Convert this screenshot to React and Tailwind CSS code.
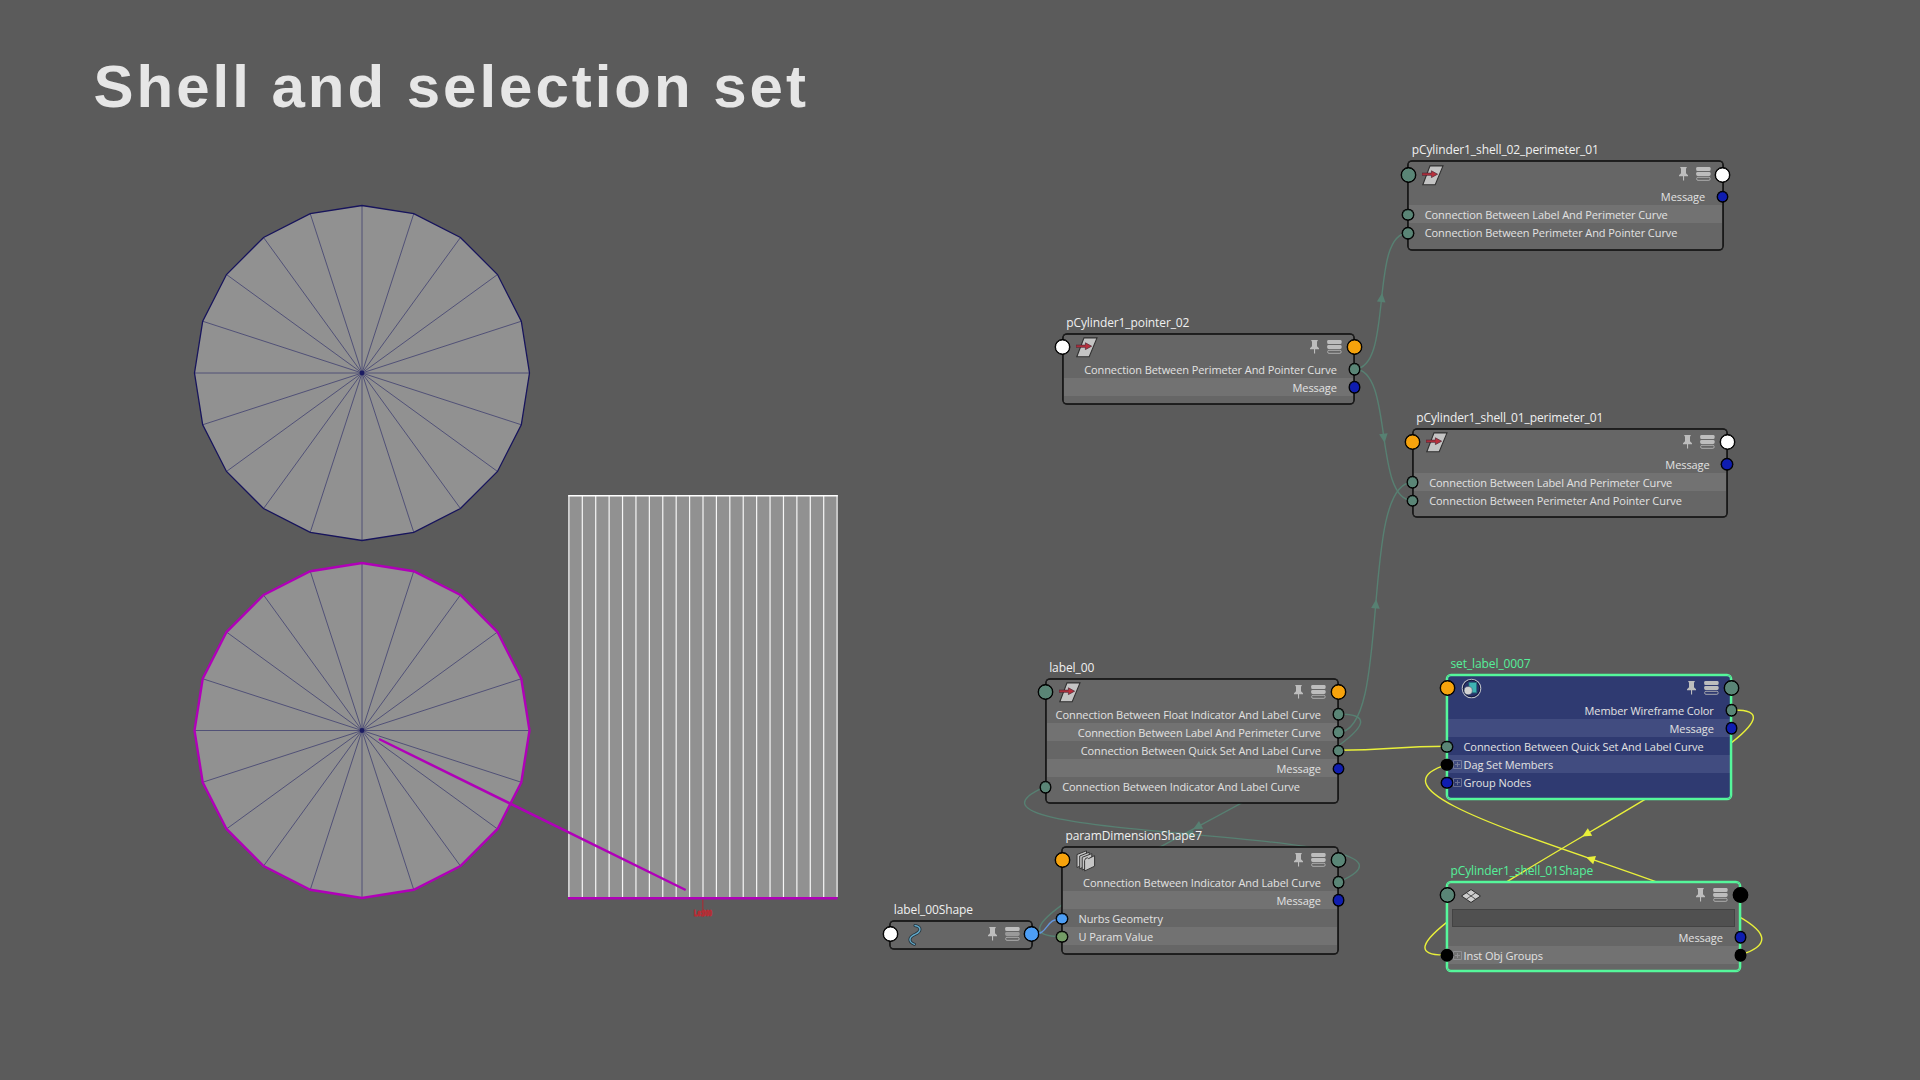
import React from 'react';

const PORT_COLORS = {
  teal: 'bg-[#5a8576]',
  white: 'bg-white',
  orange: 'bg-[#f7a30c]',
  navy: 'bg-[#0f1db0]',
  black: 'bg-black',
  sky: 'bg-[#4d9ef5]',
  green: 'bg-[#749c66]',
};

function Port({ side, color, big }) {
  const size = big ? 'size-[15px]' : 'size-[11.5px]';
  let edge;
  if (side === 'left') edge = big ? '-left-[7.5px]' : '-left-[5.75px]';
  else edge = big ? '-right-[7.5px]' : '-right-[5.75px]';
  return (
    <span
      className={`absolute top-[calc(50%+0.6px)] z-10 -translate-y-1/2 rounded-full border border-black shadow-[0_0_0_0.4px_#000] ${size} ${edge} ${PORT_COLORS[color]}`}
    />
  );
}

function CurveSetIcon() {
  return (
    <svg width="22" height="21" viewBox="0 0 22 21">
      <path d="M8 .9H21L13.2 19.8H.8Z" fill="#c4c4c4" stroke="#303030" strokeWidth="1.1" />
      <path d="M0 8.1H9.4V5.8L15.6 9.2L9.4 12.6V10.3H0Z" fill="#b92f3c" stroke="#4c2733" strokeWidth=".7" />
    </svg>
  );
}

function SetIcon() {
  return (
    <svg width="21" height="21" viewBox="0 0 21 21">
      <circle cx="10.5" cy="10.5" r="9.3" fill="#27326a" stroke="#b9bcc4" strokeWidth="1.1" />
      <circle cx="10.5" cy="10.5" r="8.2" fill="none" stroke="#15193a" strokeWidth="1" />
      <rect x="8" y="4.6" width="7.6" height="10.2" fill="#3fb3b4" stroke="#23727c" strokeWidth=".8" />
      <circle cx="7.2" cy="12.6" r="4.1" fill="#d2d2d2" stroke="#41506d" strokeWidth=".6" />
    </svg>
  );
}

function StackIcon() {
  return (
    <svg width="20" height="22" viewBox="0 0 20 22" fill="#c6c6c6" stroke="#363636" strokeWidth="1">
      <path d="M1 4.5L10.5 .8V13L1 17.5Z" />
      <path d="M3.7 6L13.2 2.2V14.4L3.7 18.8Z" />
      <path d="M6.2 7.3L15.8 3.6V15.8L6.2 20Z" />
      <path d="M8.6 10.5L9.6 8.4L11.6 7.8L12.6 8.6L18.6 5.6V16.2L8.6 21Z" />
    </svg>
  );
}

function NurbsIcon() {
  return (
    <svg width="14" height="22" viewBox="0 0 14 22" fill="none" strokeLinecap="round">
      <path d="M7 1.5C14 3 13 7.5 7.5 10.2C0 13.5 .5 18 6.5 20.3" stroke="#22333d" strokeWidth="3" />
      <path d="M7 1.5C14 3 13 7.5 7.5 10.2C0 13.5 .5 18 6.5 20.3" stroke="#63a9c9" strokeWidth="1.4" />
    </svg>
  );
}

function MeshIcon() {
  return (
    <svg width="20" height="14" viewBox="0 0 20 14">
      <path d="M10 .5L19.5 7L10 13.5L.5 7Z" fill="#cfcfcf" stroke="#2f2f2f" strokeWidth="1" />
      <path d="M5.2 3.7L14.8 10.3M14.8 3.7L5.2 10.3" stroke="#444" strokeWidth=".9" />
    </svg>
  );
}

function PinIcon() {
  return (
    <svg width="9" height="14" viewBox="0 0 9 14" fill="#bdbdbd">
      <path d="M1.3 0H7.7V1L7 1.5V6.2L9 8.3V9.2H0V8.3L2 6.2V1.5L1.3 1Z" />
      <rect x="4" y="9" width="1.1" height="4.5" />
    </svg>
  );
}

function ListIcon({ rows = 2 }) {
  return (
    <svg width="15" height="14" viewBox="0 0 15 14">
      <rect x=".2" y="0" width="14.4" height="4" rx="1.3" fill="#bdbdbd" />
      <rect x=".2" y="4.9" width="14.4" height="4" rx="1.3" fill={rows > 1 ? '#bdbdbd' : '#9a9a9a'} />
      <rect x=".7" y="10.3" width="13.4" height="3" rx="1.2" fill="none" stroke="#b4b4b4" strokeWidth=".9" />
    </svg>
  );
}

function PlusBox() {
  return (
    <svg width="9" height="9" viewBox="0 0 9 9" className="opacity-45" fill="none" stroke="#b0b0b8">
      <path d="M.5 .5H8.5V8.5H.5ZM2 4.5H7M4.5 2V7" />
    </svg>
  );
}

const ICONS = { curve: CurveSetIcon, set: SetIcon, stack: StackIcon, nurbs: NurbsIcon, mesh: MeshIcon };
const ICON_PAD = {
  curve: 'pl-[13.5px]',
  set: 'pl-[13.5px]',
  stack: 'pl-[14px]',
  nurbs: 'pl-[17.5px]',
  mesh: 'pl-[14px]',
};

function Row({ row, blue }) {
  const band = row.band ? (blue ? 'bg-[#414c80]' : 'bg-[#727272]') : '';
  const justify = row.side === 'right' ? 'justify-end pr-[16.5px]' : row.expand ? 'pl-[5px]' : 'pl-[15.5px]';
  return (
    <div className="relative h-[18.2px] px-px">
      <div
        className={`flex h-full items-center gap-[1.5px] whitespace-nowrap pt-[1px] text-[11px] leading-none tracking-[-0.08px] text-[#e2e2e2] ${band} ${justify}`}
      >
        {row.expand && <PlusBox />}
        <span>{row.label}</span>
      </div>
      {row.left && <Port side="left" color={row.left} />}
      {row.right && <Port side="right" color={row.right} />}
    </div>
  );
}

function Node({ node }) {
  const Icon = ICONS[node.icon];
  const frame = node.selected
    ? 'shadow-[0_0_0_1.3px_#55f79b,inset_0_0_0_1.2px_#55f79b]'
    : 'shadow-[0_0_0_0.8px_#0a0a0a,inset_0_0_0_0.7px_#0a0a0a]';
  const fill = node.blue ? 'bg-[#2f3a71]' : 'bg-[#666666]';
  return (
    <div className="absolute" style={{ left: node.x, top: node.y - 20, width: node.w }}>
      <div
        className={`h-5 whitespace-nowrap pt-px pl-[3.5px] text-xs leading-4 tracking-[-0.1px] ${node.selected ? 'text-[#55f09a]' : 'text-[#f0f0f0]'}`}
      >
        {node.title}
      </div>
      <div className={`relative rounded-[4px] ${fill}`} style={{ height: node.h }}>
        <div className="relative flex h-[26px] items-center justify-between pt-[2px] pr-[12px]">
          <Port side="left" color={node.head[0]} big />
          <div className={ICON_PAD[node.icon]}>
            <Icon />
          </div>
          <div className="flex items-center gap-[8px] pb-[2px]">
            <PinIcon />
            <ListIcon rows={node.icon === 'nurbs' ? 1 : 2} />
          </div>
          <Port side="right" color={node.head[1]} big />
        </div>
        {node.field && (
          <div className="flex h-5 px-[5px] pt-px pb-px">
            <div className="flex-1 border border-[#434343] bg-[#505050]" />
          </div>
        )}
        {node.rows.map((row) => (
          <Row key={row.label} row={row} blue={node.blue} />
        ))}
        <div className={`pointer-events-none absolute inset-0 rounded-[4px] ${frame}`} />
      </div>
    </div>
  );
}

const FLOAT = 'Connection Between Float Indicator And Label Curve';
const PERIMETER = 'Connection Between Label And Perimeter Curve';
const POINTER = 'Connection Between Perimeter And Pointer Curve';
const QUICK = 'Connection Between Quick Set And Label Curve';
const INDICATOR = 'Connection Between Indicator And Label Curve';

const NODES = [
  {
    title: 'pCylinder1_shell_02_perimeter_01', x: 1408.2, y: 161, w: 314.4, h: 88.5, icon: 'curve', head: ['teal', 'white'],
    rows: [
      { label: 'Message', side: 'right', right: 'navy' },
      { label: PERIMETER, left: 'teal', band: true },
      { label: POINTER, left: 'teal' },
    ],
  },
  {
    title: 'pCylinder1_pointer_02', x: 1062.7, y: 333.5, w: 291.6, h: 70, icon: 'curve', head: ['white', 'orange'],
    rows: [
      { label: POINTER, side: 'right', right: 'teal' },
      { label: 'Message', side: 'right', right: 'navy', band: true },
    ],
  },
  {
    title: 'pCylinder1_shell_01_perimeter_01', x: 1412.7, y: 428.6, w: 314.4, h: 88.5, icon: 'curve', head: ['orange', 'white'],
    rows: [
      { label: 'Message', side: 'right', right: 'navy' },
      { label: PERIMETER, left: 'teal', band: true },
      { label: POINTER, left: 'teal' },
    ],
  },
  {
    title: 'label_00', x: 1045.7, y: 678.6, w: 292.6, h: 124.4, icon: 'curve', head: ['teal', 'orange'],
    rows: [
      { label: FLOAT, side: 'right', right: 'teal' },
      { label: PERIMETER, side: 'right', right: 'teal', band: true },
      { label: QUICK, side: 'right', right: 'teal' },
      { label: 'Message', side: 'right', right: 'navy', band: true },
      { label: INDICATOR, left: 'teal' },
    ],
  },
  {
    title: 'set_label_0007', x: 1447, y: 674.5, w: 284.3, h: 124.3, icon: 'set', head: ['orange', 'teal'], selected: true, blue: true,
    rows: [
      { label: 'Member Wireframe Color', side: 'right', right: 'teal' },
      { label: 'Message', side: 'right', right: 'navy', band: true },
      { label: QUICK, left: 'teal' },
      { label: 'Dag Set Members', left: 'black', band: true, expand: true },
      { label: 'Group Nodes', left: 'navy', expand: true },
    ],
  },
  {
    title: 'paramDimensionShape7', x: 1062, y: 846.5, w: 276.3, h: 107, icon: 'stack', head: ['orange', 'teal'],
    rows: [
      { label: INDICATOR, side: 'right', right: 'teal' },
      { label: 'Message', side: 'right', right: 'navy', band: true },
      { label: 'Nurbs Geometry', left: 'sky' },
      { label: 'U Param Value', left: 'green', band: true },
    ],
  },
  { title: 'label_00Shape', x: 890.3, y: 920.7, w: 141.7, h: 28.8, icon: 'nurbs', head: ['white', 'sky'], rows: [] },
  {
    title: 'pCylinder1_shell_01Shape', x: 1447, y: 881.5, w: 293.3, h: 89.7, icon: 'mesh', head: ['teal', 'black'], selected: true, field: true,
    rows: [
      { label: 'Message', side: 'right', right: 'navy' },
      { label: 'Inst Obj Groups', left: 'black', right: 'black', band: true, expand: true },
    ],
  },
];

const TEAL = '#578072';
const YELLOW = '#e9f03a';

// Wires run from an output to an input; `c` is the horizontal handle length, `k` its lift.
const WIRES = [
  { from: [1354.3, 369], to: [1408.3, 233], c: 40, k: 0, color: TEAL, arrow: true },
  { from: [1354.3, 369], to: [1412.7, 500.5], c: 40, k: 0, color: TEAL, arrow: true },
  { from: [1338.3, 732.3], to: [1412.7, 482.3], c: 54, k: 0, color: TEAL, arrow: true },
  { from: [1338.3, 714], to: [1062, 936.7], c: 138, k: 0, color: TEAL, arrow: true },
  { from: [1338.3, 882], to: [1045.7, 786.7], c: 135, k: -57, color: TEAL, arrow: true },
  { from: [1032, 934.7], to: [1062, 918.7], c: 18, k: 0, color: '#6496dc', arrow: false },
  { from: [1338.3, 750.3], to: [1447, 746.3], c: 54, k: 0, color: YELLOW, arrow: false },
  { from: [1731.3, 710], to: [1447, 955], c: 138, k: -4, color: YELLOW, arrow: true },
  { from: [1740.3, 955], to: [1447, 764.7], c: 137, k: -42, color: YELLOW, arrow: true },
];

function Wire({ wire }) {
  const [x0, y0] = wire.from;
  const [x1, y1] = wire.to;
  const { c, k } = wire;
  const angle = (Math.atan2(2 * (y1 - y0) - 2 * k, 2 * (x1 - x0) - 2 * c) * 180) / Math.PI;
  return (
    <g>
      <path
        d={`M${x0} ${y0}C${x0 + c} ${y0 + k} ${x1 - c} ${y1 - k} ${x1} ${y1}`}
        fill="none"
        stroke={wire.color}
        strokeWidth="1.4"
      />
      {wire.arrow && (
        <path
          d="M-8 0L1 -4.3V4.3Z"
          fill={wire.color}
          transform={`translate(${(x0 + x1) / 2} ${(y0 + y1) / 2}) rotate(${angle + 180})`}
        />
      )}
    </g>
  );
}

function Disc({ cx, cy, outline, width }) {
  const r = 167.5;
  const pts = Array.from({ length: 20 }, (_, i) => {
    const a = (i * Math.PI) / 10;
    return [cx + r * Math.cos(a), cy + r * Math.sin(a)];
  });
  return (
    <g>
      <polygon points={pts.map((p) => p.join(',')).join(' ')} fill="#919191" />
      {pts.map(([x, y], i) => (
        <line key={i} x1={cx} y1={cy} x2={x} y2={y} stroke="#4a4974" strokeWidth=".9" />
      ))}
      <polygon points={pts.map((p) => p.join(',')).join(' ')} fill="none" stroke={outline} strokeWidth={width} />
      <circle cx={cx} cy={cy} r="2.4" fill="#1c1c62" />
    </g>
  );
}

function UvShells() {
  return (
    <g>
      <Disc cx={362} cy={373} outline="#17145c" width={1.3} />
      <Disc cx={362} cy={730.5} outline="#b000b8" width={2.4} />
      <rect x="568.5" y="495.5" width="268.5" height="402" fill="#919191" />
      {Array.from({ length: 21 }, (_, i) => (
        <line key={i} x1={568.9 + i * 13.41} x2={568.9 + i * 13.41} y1="495" y2="897" stroke="#f6f6f6" strokeWidth="1.2" />
      ))}
      <line x1="568.3" x2="837.7" y1="495.8" y2="495.8" stroke="#fff" strokeWidth="1.4" />
      <path d="M568 898.2H837.5M379 739L685.7 890" fill="none" stroke="#b000b8" strokeWidth="2.5" />
      <line x1="702.8" x2="702.8" y1="899.4" y2="917" stroke="#a33038" strokeWidth="1.2" />
      <text
        x="694"
        y="916.2"
        textLength="18"
        lengthAdjust="spacingAndGlyphs"
        fill="#b82c34"
        stroke="#b82c34"
        strokeWidth="1"
        className="font-['Liberation_Sans'] text-[9px] font-bold"
      >
        Le:000
      </text>
    </g>
  );
}

export default function App() {
  return (
    <main className="relative h-[1080px] w-[1920px] overflow-hidden bg-[#5b5b5b] font-['Open_Sans','Noto_Sans',sans-serif]">
      <h1 className="pt-[57px] pl-[93.5px] font-['Liberation_Sans',Arial,sans-serif] text-[60px] leading-none font-bold tracking-[2.98px] text-[#e6e6e6]">
        Shell and selection set
      </h1>
      <svg className="absolute inset-0" width="1920" height="1080" viewBox="0 0 1920 1080">
        <UvShells />
        {WIRES.map((wire, i) => (
          <Wire key={i} wire={wire} />
        ))}
      </svg>
      {NODES.map((node) => (
        <Node key={node.title} node={node} />
      ))}
    </main>
  );
}
